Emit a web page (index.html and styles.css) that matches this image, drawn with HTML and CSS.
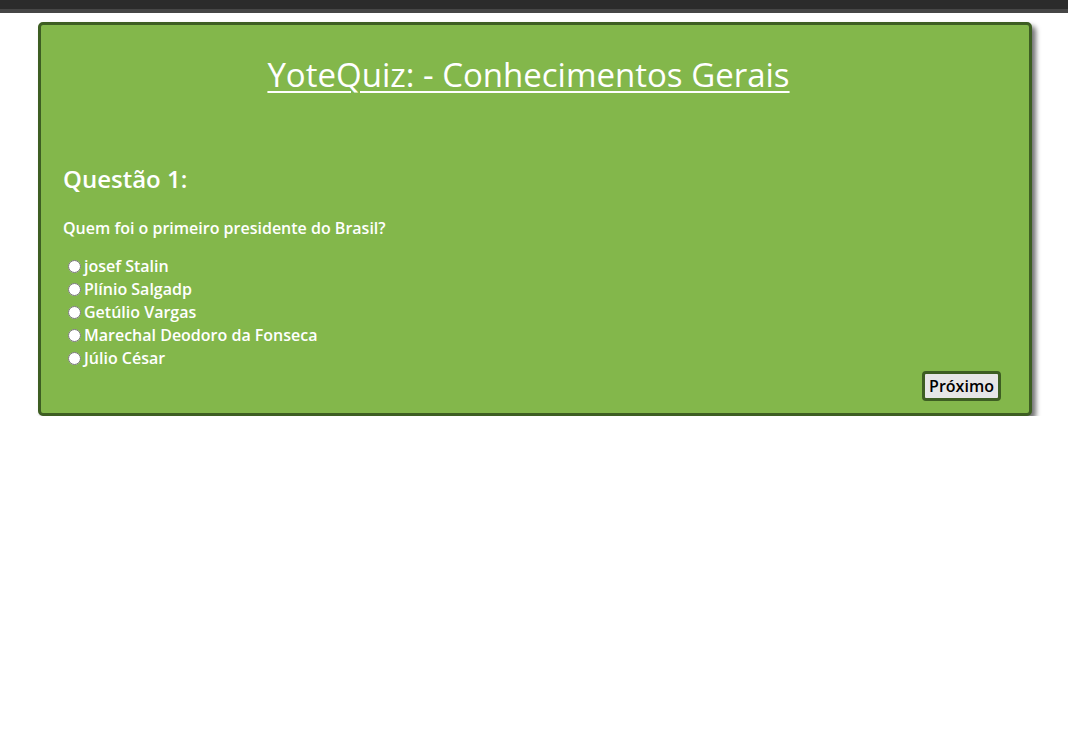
FILE: index.html
```html
<!DOCTYPE html>
<html lang="pt">
<head>
<meta charset="utf-8">
<title>YoteQuiz</title>
<link rel="stylesheet" href="styles.css">
</head>
<body>
<div class="topbar"></div>
<div class="quiz">
  <h1 class="title">YoteQuiz: - Conhecimentos Gerais</h1>
  <h2 class="qnum">Questão 1:</h2>
  <p class="question">Quem foi o primeiro presidente do Brasil?</p>
  <div class="options">
    <label class="opt"><input type="radio" name="q1">josef Stalin</label>
    <label class="opt"><input type="radio" name="q1">Plínio Salgadp</label>
    <label class="opt"><input type="radio" name="q1">Getúlio Vargas</label>
    <label class="opt"><input type="radio" name="q1">Marechal Deodoro da Fonseca</label>
    <label class="opt"><input type="radio" name="q1">Júlio César</label>
  </div>
  <div class="actions"><button class="next">Próximo</button></div>
</div>
</body>
</html>
```
FILE: styles.css
```css
html, body {
  margin: 0;
  padding: 0;
  background: #ffffff;
  font-family: "Open Sans", "Liberation Sans", sans-serif;
}
.topbar {
  height: 9px;
  background: #2b2b2b;
  border-bottom: 4px solid #464646;
}
.quiz {
  box-sizing: border-box;
  width: 994px;
  margin: 9px 0 0 38px;
  padding: 0 22px 12px 22px;
  background: #83b74b;
  border: 3px solid #3d5e22;
  border-radius: 5px;
  box-shadow: 4px 4px 5px rgba(0,0,0,0.55);
  color: #ffffff;
}
.title {
  margin: 27px 0 0 0;
  padding-right: 13px;
  font-size: 33px;
  font-weight: 400;
  text-decoration: underline;
  text-decoration-thickness: 2px;
  text-underline-offset: 4px;
  text-align: center;
  line-height: 45px;
}
.qnum {
  margin: 66px 0 0 0;
  font-size: 24px;
  font-weight: 600;
  line-height: 32px;
}
.question {
  margin: 22px 0 0 0;
  font-size: 16px;
  font-weight: 600;
  line-height: 22px;
}
.options {
  margin-top: 16px;
  display: flex;
  flex-direction: column;
}
.opt {
  font-size: 16px;
  font-weight: 600;
  line-height: 23px;
  display: flex;
  align-items: center;
}
.opt input {
  margin: 0 3px 0 5px;
  width: 13px;
  height: 13px;
}
.actions {
  display: flex;
  justify-content: flex-end;
  padding-top: 1px;
  padding-right: 6px;
}
.next {
  box-sizing: border-box;
  font-family: "Open Sans", "Liberation Sans", sans-serif;
  font-size: 16px;
  font-weight: 600;
  color: #000;
  background: #e6e6e6;
  border: 3px solid #3d5e22;
  border-radius: 4px;
  padding: 0;
  width: 79px;
  height: 30px;
  line-height: 22px;
}
```
